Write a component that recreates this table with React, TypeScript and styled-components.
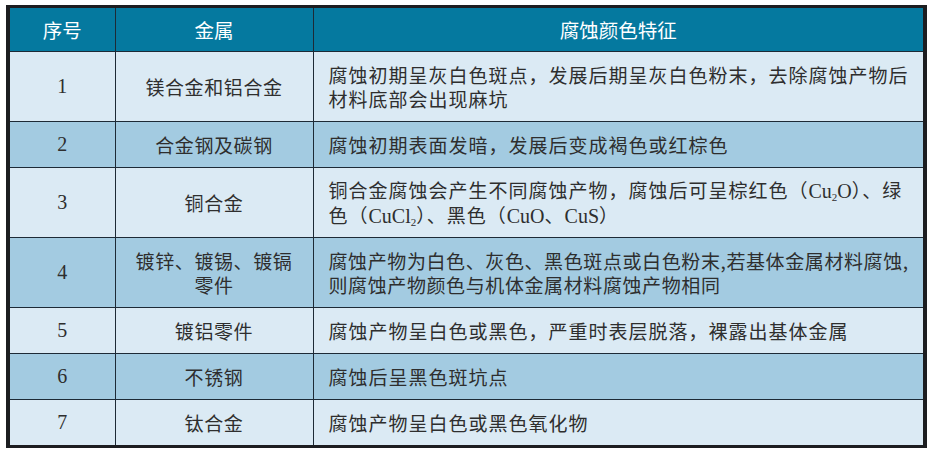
import React from 'react';
import styled, { createGlobalStyle } from 'styled-components';

const GlobalStyle = createGlobalStyle`
  html, body {
    margin: 0;
    padding: 0;
    background: #ffffff;
  }
`

const Page = styled.div`
  padding: 5px 4px 0 6px;
  width: 931px;
  box-sizing: border-box;
`

const Table = styled.table`
  width: 921px;
  border-collapse: collapse;
  table-layout: fixed;
  border-style: solid;
  border-color: #1c1d20;
  border-width: 3px 4px 3px 4px;
  font-family: "Noto Sans CJK SC", "Liberation Serif", serif;
  color: #2e2e2e;
`

const HeadCell = styled.th`
  background: #05799f;
  color: #ffffff;
  font-weight: 400;
  font-size: 19.5px;
  height: 43px;
  padding: 0;
  text-align: center;
  border: 1px solid #1d2a36;
  border-top: none;
`

const Row = styled.tr<{ $dark?: boolean }>`
  background: ${p => (p.$dark ? '#a3cbe1' : '#dbeaf4')};
`

const NumCell = styled.td<{ $tall?: boolean }>`
  height: ${p => (p.$tall ? '69px' : '45px')};
  padding: 0;
  text-align: center;
  font-family: "Liberation Serif", serif;
  font-size: 20px;
  border: 1px solid #1d2a36;
`

const MetalCell = styled.td`
  padding: 0;
  text-align: center;
  font-size: 19px;
  letter-spacing: 0.6px;
  line-height: 24px;
  border: 1px solid #1d2a36;
`

const DescCell = styled.td<{ $tight?: boolean }>`
  padding: 0 0 0 15px;
  text-align: left;
  font-size: 19px;
  line-height: 24px;
  white-space: nowrap;
  letter-spacing: ${p => (p.$tight ? '0.6px' : '1px')};
  border: 1px solid #1d2a36;
`

const Line = styled.div``

const Formula = styled.span`
  font-family: "Liberation Serif", serif;
  font-size: 20px;
  letter-spacing: 0;
`

const Sub = styled.sub`
  font-size: 11px;
  vertical-align: -3px;
  line-height: 0;
`

type Item = {
  n: string
  metal: React.ReactNode
  desc: React.ReactNode[]
  tight?: boolean
}

const items: Item[] = [
  {
    n: '1',
    metal: '镁合金和铝合金',
    desc: ['腐蚀初期呈灰白色斑点，发展后期呈灰白色粉末，去除腐蚀产物后', '材料底部会出现麻坑'],
  },
  { n: '2', metal: '合金钢及碳钢', desc: ['腐蚀初期表面发暗，发展后变成褐色或红棕色'] },
  {
    n: '3',
    metal: '铜合金',
    desc: [
      <>铜合金腐蚀会产生不同腐蚀产物，腐蚀后可呈棕红色（<Formula>Cu<Sub>2</Sub>O</Formula>）、绿</>,
      <>色（<Formula>CuCl<Sub>2</Sub></Formula>）、黑色（<Formula>CuO</Formula>、<Formula>CuS</Formula>）</>,
    ],
  },
  {
    n: '4',
    metal: <><Line>镀锌、镀锡、镀镉</Line><Line>零件</Line></>,
    desc: ['腐蚀产物为白色、灰色、黑色斑点或白色粉末,若基体金属材料腐蚀,', '则腐蚀产物颜色与机体金属材料腐蚀产物相同'],
    tight: true,
  },
  { n: '5', metal: '镀铝零件', desc: ['腐蚀产物呈白色或黑色，严重时表层脱落，裸露出基体金属'] },
  { n: '6', metal: '不锈钢', desc: ['腐蚀后呈黑色斑坑点'] },
  { n: '7', metal: '钛合金', desc: ['腐蚀产物呈白色或黑色氧化物'] },
]

export default function App() {
  return (
    <>
      <GlobalStyle />
      <Page>
        <Table>
          <colgroup>
            <col style={{ width: 107 }} />
            <col style={{ width: 198 }} />
            <col />
          </colgroup>
          <thead>
            <tr>
              <HeadCell>序号</HeadCell>
              <HeadCell>金属</HeadCell>
              <HeadCell>腐蚀颜色特征</HeadCell>
            </tr>
          </thead>
          <tbody>
            {items.map((it, i) => (
              <Row key={it.n} $dark={i % 2 === 1}>
                <NumCell $tall={it.desc.length > 1}>{it.n}</NumCell>
                <MetalCell>{it.metal}</MetalCell>
                <DescCell $tight={it.tight}>
                  {it.desc.map((d, j) => (
                    <Line key={j}>{d}</Line>
                  ))}
                </DescCell>
              </Row>
            ))}
          </tbody>
        </Table>
      </Page>
    </>
  )
}
